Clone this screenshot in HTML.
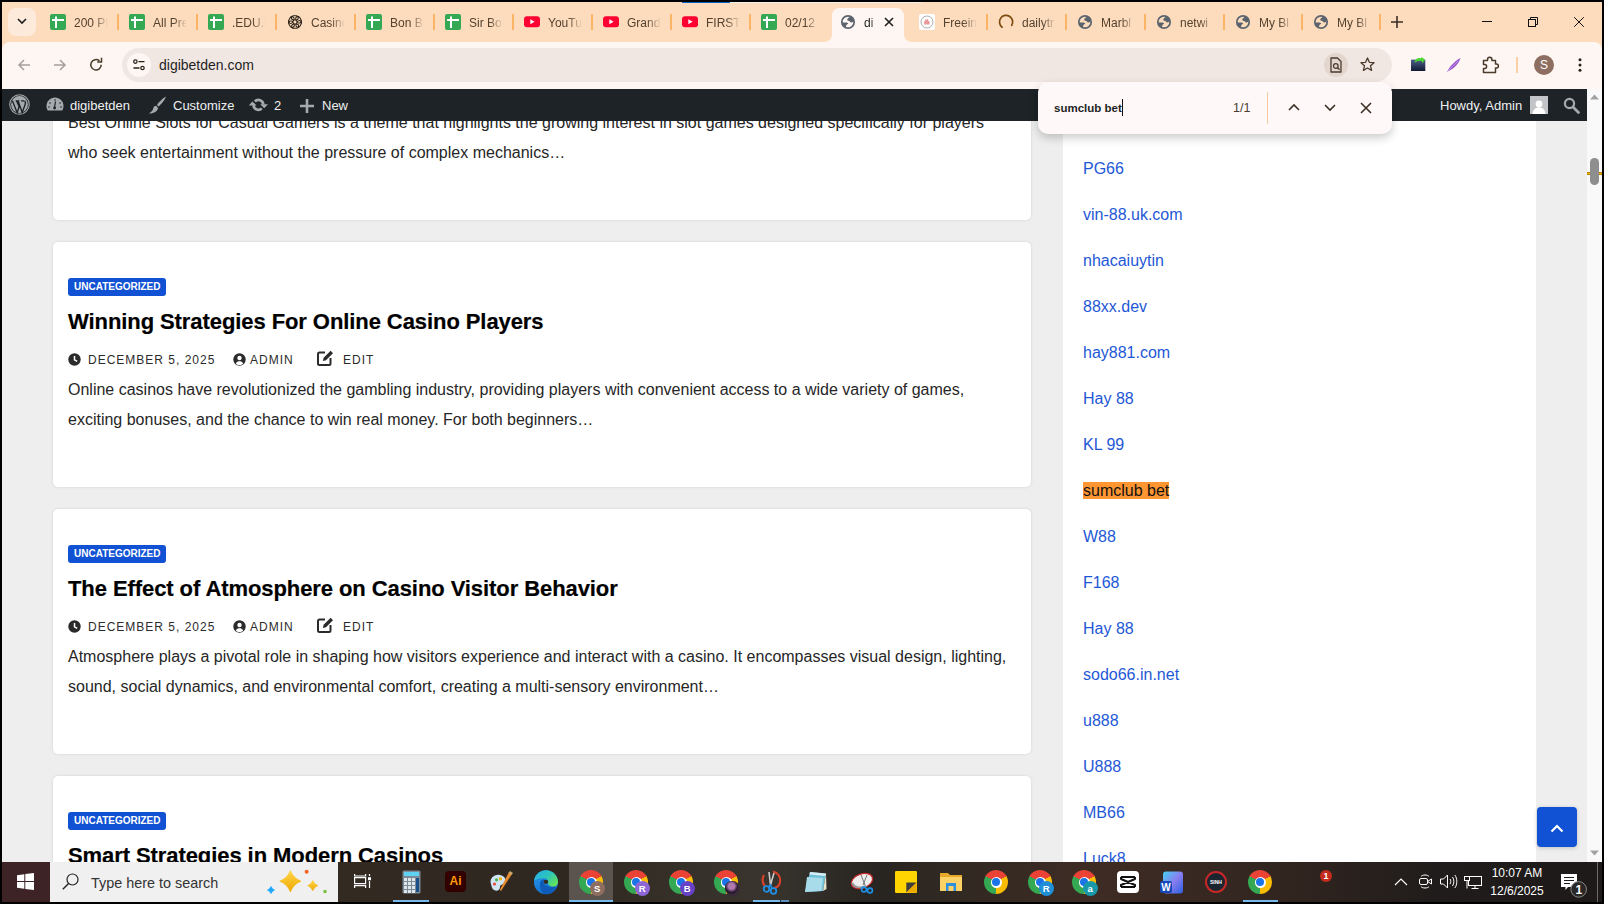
<!DOCTYPE html>
<html><head><meta charset="utf-8">
<style>
*{margin:0;padding:0;box-sizing:border-box}
html,body{width:1604px;height:904px;overflow:hidden;background:#000;font-family:"Liberation Sans",sans-serif;position:relative}
.a{position:absolute}
svg{display:block;overflow:visible}
#tabstrip{left:2px;top:2px;width:1600px;height:60px;background:#fddcbe}
#toolbar{left:2px;top:42px;width:1600px;height:47px;background:#fef6f2;border-radius:8px 8px 0 0}
#omni{left:122px;top:48px;width:1270px;height:34px;background:#f1e7e2;border-radius:17px}
#adminbar{left:2px;top:89px;width:1585px;height:32px;background:#1d2327;color:#f0f0f1;font-size:13px}
#content{left:2px;top:121px;width:1585px;height:741px;background:#eeeeee;overflow:hidden}
#scroll{left:1587px;top:89px;width:15px;height:773px;background:#f9f9f9}
#taskbar{left:2px;top:862px;width:1600px;height:40px;background:linear-gradient(90deg,#332a22 21%,#2f2820 34.9%,#39352e 47.4%,#272421 54.9%,#2f2822 58%,#3e2c24 68.6%,#30241f 81.1%,#1f1c1b 89.9%,#1d1a19 100%)}
.card{position:absolute;left:51px;width:978px;background:#fff;border-radius:5px;box-shadow:0 0 3px rgba(0,0,0,.12)}
.badge{position:absolute;left:15px;height:18px;padding:0 6px;background:#1151d3;color:#fff;font-size:10px;font-weight:700;line-height:18px;border-radius:3px}
.h{position:absolute;left:15px;font-size:22px;font-weight:700;color:#000;letter-spacing:-0.08px;white-space:nowrap;-webkit-text-stroke:0.2px #000}
.meta{position:absolute;font-size:12px;letter-spacing:1px;color:#2b2b2b;white-space:nowrap}
.ex{position:absolute;left:15px;font-size:16px;color:#262626;line-height:30px;white-space:nowrap}
#sidebar{left:1061px;top:0;width:473px;height:741px;background:#fff}
.lk{position:absolute;left:20px;font-size:16px;color:#1e58d6;white-space:nowrap;line-height:18px}
.sep{position:absolute;top:14px;width:2px;height:16px;background:#fbb466}
.tt{position:absolute;top:15px;font-size:12px;line-height:16px;color:#54422f;white-space:nowrap;width:34px;overflow:hidden;-webkit-mask-image:linear-gradient(90deg,#000 60%,transparent 100%)}
.ab{position:absolute;top:1px;line-height:32px;white-space:nowrap;color:#f0f0f1}
</style></head><body>

<div id="tabstrip" class="a"></div>
<div class="a" style="left:682px;top:2px;width:48px;height:1px;background:#0b62c4"></div><div class="a" style="left:730px;top:2px;width:192px;height:1px;background:#f2efec"></div>
<!-- tab dropdown -->
<div class="a" style="left:8px;top:8px;width:28px;height:28px;background:#feeadb;border-radius:8px"></div>
<svg class="a" style="left:16px;top:17px" width="12" height="8" viewBox="0 0 12 8"><path d="M2 2 L6 6 L10 2" fill="none" stroke="#1f1f1f" stroke-width="1.6"/></svg>
<svg class="a" style="left:50px;top:14px" width="16" height="16" viewBox="0 0 16 16"><rect width="16" height="16" rx="2" fill="#34a853"/><rect x="2" y="5" width="12" height="2" fill="#fff"/><rect x="5" y="2.5" width="2" height="11.5" fill="#fff"/></svg>
<div class="tt" style="left:74px">200 PI</div>
<svg class="a" style="left:129px;top:14px" width="16" height="16" viewBox="0 0 16 16"><rect width="16" height="16" rx="2" fill="#34a853"/><rect x="2" y="5" width="12" height="2" fill="#fff"/><rect x="5" y="2.5" width="2" height="11.5" fill="#fff"/></svg>
<div class="tt" style="left:153px">All Pre</div>
<svg class="a" style="left:208px;top:14px" width="16" height="16" viewBox="0 0 16 16"><rect width="16" height="16" rx="2" fill="#34a853"/><rect x="2" y="5" width="12" height="2" fill="#fff"/><rect x="5" y="2.5" width="2" height="11.5" fill="#fff"/></svg>
<div class="tt" style="left:232px">.EDU.F</div>
<svg class="a" style="left:287px;top:14px" width="16" height="16" viewBox="0 0 16 16"><g fill="none" stroke="#2a2118" stroke-width="1.05"><rect x="4.3" y="1.7" width="7" height="4.3" rx="2.15" transform="rotate(0 8 8)"/><rect x="4.3" y="1.7" width="7" height="4.3" rx="2.15" transform="rotate(60 8 8)"/><rect x="4.3" y="1.7" width="7" height="4.3" rx="2.15" transform="rotate(120 8 8)"/><rect x="4.3" y="1.7" width="7" height="4.3" rx="2.15" transform="rotate(180 8 8)"/><rect x="4.3" y="1.7" width="7" height="4.3" rx="2.15" transform="rotate(240 8 8)"/><rect x="4.3" y="1.7" width="7" height="4.3" rx="2.15" transform="rotate(300 8 8)"/></g></svg>
<div class="tt" style="left:311px">Casino</div>
<svg class="a" style="left:366px;top:14px" width="16" height="16" viewBox="0 0 16 16"><rect width="16" height="16" rx="2" fill="#34a853"/><rect x="2" y="5" width="12" height="2" fill="#fff"/><rect x="5" y="2.5" width="2" height="11.5" fill="#fff"/></svg>
<div class="tt" style="left:390px">Bon B</div>
<svg class="a" style="left:445px;top:14px" width="16" height="16" viewBox="0 0 16 16"><rect width="16" height="16" rx="2" fill="#34a853"/><rect x="2" y="5" width="12" height="2" fill="#fff"/><rect x="5" y="2.5" width="2" height="11.5" fill="#fff"/></svg>
<div class="tt" style="left:469px">Sir Bo</div>
<svg class="a" style="left:524px;top:16px" width="16" height="12" viewBox="0 0 16 12"><rect y="0.3" width="16" height="11" rx="3" fill="#ff0033"/><path d="M6.3 3.3 L10.6 5.8 L6.3 8.3Z" fill="#fff"/></svg>
<div class="tt" style="left:548px">YouTu</div>
<svg class="a" style="left:603px;top:16px" width="16" height="12" viewBox="0 0 16 12"><rect y="0.3" width="16" height="11" rx="3" fill="#ff0033"/><path d="M6.3 3.3 L10.6 5.8 L6.3 8.3Z" fill="#fff"/></svg>
<div class="tt" style="left:627px">Grand</div>
<svg class="a" style="left:682px;top:16px" width="16" height="12" viewBox="0 0 16 12"><rect y="0.3" width="16" height="11" rx="3" fill="#ff0033"/><path d="M6.3 3.3 L10.6 5.8 L6.3 8.3Z" fill="#fff"/></svg>
<div class="tt" style="left:706px">FIRST</div>
<svg class="a" style="left:761px;top:14px" width="16" height="16" viewBox="0 0 16 16"><rect width="16" height="16" rx="2" fill="#34a853"/><rect x="2" y="5" width="12" height="2" fill="#fff"/><rect x="5" y="2.5" width="2" height="11.5" fill="#fff"/></svg>
<div class="tt" style="left:785px">02/12</div>
<svg class="a" style="left:919px;top:14px" width="16" height="16" viewBox="0 0 16 16"><rect width="16" height="16" rx="2" fill="#fff"/><circle cx="8" cy="8" r="6" fill="none" stroke="#888" stroke-width="0.7"/><path d="M5.2 10.6 L5.2 7 L6.6 6.2 L6.6 5 L8 5.8 L8.6 4.6 L9.2 6.6 L10.6 7.4 L10.6 10.6Z" fill="#e89a9a"/></svg>
<div class="tt" style="left:943px">Freein</div>
<svg class="a" style="left:998px;top:14px" width="16" height="16" viewBox="0 0 16 16"><path d="M4.1 13.2 A6.6 6.6 0 1 1 13.7 11.4" fill="none" stroke="#7b4a0c" stroke-width="1.7" stroke-linecap="round"/></svg>
<div class="tt" style="left:1022px">dailytr</div>
<svg class="a" style="left:1077px;top:14px" width="16" height="16" viewBox="0 0 16 16"><circle cx="8" cy="8" r="6.2" fill="none" stroke="#5b636d" stroke-width="1.7"/><path d="M7.2 5.5 C7.8 4 9 3 11 2.4 L14 5 L13.8 7.4 C12.5 8.2 11.5 8.6 10.8 8.4 C10.2 7.8 9.8 7.2 9 7 C8 6.8 7.3 6.5 7.2 5.5Z" fill="#5b636d"/><path d="M2 8.4 L6.6 8.4 C7.5 8.5 8.3 9.2 8.2 9.8 C7.5 10.3 6.6 10.6 6.3 11.4 C6 12.2 6 12.8 5.8 13.8 L2.5 11Z" fill="#5b636d"/></svg>
<div class="tt" style="left:1101px">Marbl</div>
<svg class="a" style="left:1156px;top:14px" width="16" height="16" viewBox="0 0 16 16"><circle cx="8" cy="8" r="6.2" fill="none" stroke="#5b636d" stroke-width="1.7"/><path d="M7.2 5.5 C7.8 4 9 3 11 2.4 L14 5 L13.8 7.4 C12.5 8.2 11.5 8.6 10.8 8.4 C10.2 7.8 9.8 7.2 9 7 C8 6.8 7.3 6.5 7.2 5.5Z" fill="#5b636d"/><path d="M2 8.4 L6.6 8.4 C7.5 8.5 8.3 9.2 8.2 9.8 C7.5 10.3 6.6 10.6 6.3 11.4 C6 12.2 6 12.8 5.8 13.8 L2.5 11Z" fill="#5b636d"/></svg>
<div class="tt" style="left:1180px">netwi</div>
<svg class="a" style="left:1235px;top:14px" width="16" height="16" viewBox="0 0 16 16"><circle cx="8" cy="8" r="6.2" fill="none" stroke="#5b636d" stroke-width="1.7"/><path d="M7.2 5.5 C7.8 4 9 3 11 2.4 L14 5 L13.8 7.4 C12.5 8.2 11.5 8.6 10.8 8.4 C10.2 7.8 9.8 7.2 9 7 C8 6.8 7.3 6.5 7.2 5.5Z" fill="#5b636d"/><path d="M2 8.4 L6.6 8.4 C7.5 8.5 8.3 9.2 8.2 9.8 C7.5 10.3 6.6 10.6 6.3 11.4 C6 12.2 6 12.8 5.8 13.8 L2.5 11Z" fill="#5b636d"/></svg>
<div class="tt" style="left:1259px">My Bl</div>
<svg class="a" style="left:1313px;top:14px" width="16" height="16" viewBox="0 0 16 16"><circle cx="8" cy="8" r="6.2" fill="none" stroke="#5b636d" stroke-width="1.7"/><path d="M7.2 5.5 C7.8 4 9 3 11 2.4 L14 5 L13.8 7.4 C12.5 8.2 11.5 8.6 10.8 8.4 C10.2 7.8 9.8 7.2 9 7 C8 6.8 7.3 6.5 7.2 5.5Z" fill="#5b636d"/><path d="M2 8.4 L6.6 8.4 C7.5 8.5 8.3 9.2 8.2 9.8 C7.5 10.3 6.6 10.6 6.3 11.4 C6 12.2 6 12.8 5.8 13.8 L2.5 11Z" fill="#5b636d"/></svg>
<div class="tt" style="left:1337px">My Bl</div>
<div class="sep" style="left:117px"></div>
<div class="sep" style="left:196px"></div>
<div class="sep" style="left:275px"></div>
<div class="sep" style="left:354px"></div>
<div class="sep" style="left:433px"></div>
<div class="sep" style="left:512px"></div>
<div class="sep" style="left:591px"></div>
<div class="sep" style="left:670px"></div>
<div class="sep" style="left:749px"></div>
<div class="sep" style="left:986px"></div>
<div class="sep" style="left:1065px"></div>
<div class="sep" style="left:1144px"></div>
<div class="sep" style="left:1223px"></div>
<div class="sep" style="left:1301px"></div>
<div class="sep" style="left:1379px"></div>
<!-- active tab -->
<svg class="a" style="left:823px;top:8px" width="90" height="34" viewBox="0 0 90 34"><path d="M0 34 C6 34 9 31 9 26 L9 8 C9 3 12 0 17 0 L73 0 C78 0 81 3 81 8 L81 26 C81 31 84 34 90 34Z" fill="#fef6f2"/></svg>
<svg class="a" style="left:840px;top:14px" width="16" height="16" viewBox="0 0 16 16"><circle cx="8" cy="8" r="6.2" fill="none" stroke="#5b636d" stroke-width="1.7"/><path d="M7.2 5.5 C7.8 4 9 3 11 2.4 L14 5 L13.8 7.4 C12.5 8.2 11.5 8.6 10.8 8.4 C10.2 7.8 9.8 7.2 9 7 C8 6.8 7.3 6.5 7.2 5.5Z" fill="#5b636d"/><path d="M2 8.4 L6.6 8.4 C7.5 8.5 8.3 9.2 8.2 9.8 C7.5 10.3 6.6 10.6 6.3 11.4 C6 12.2 6 12.8 5.8 13.8 L2.5 11Z" fill="#5b636d"/></svg>
<div class="tt" style="left:864px;width:12px;color:#1f1f1f">di</div>
<svg class="a" style="left:884px;top:17px" width="10" height="10" viewBox="0 0 10 10"><path d="M1 1 L9 9 M9 1 L1 9" stroke="#1f1f1f" stroke-width="1.6"/></svg>
<!-- new tab + -->
<svg class="a" style="left:1390px;top:15px" width="14" height="14" viewBox="0 0 14 14"><path d="M7 1 V13 M1 7 H13" stroke="#3b2f26" stroke-width="1.6"/></svg>
<!-- window controls -->
<svg class="a" style="left:1482px;top:21px" width="10" height="2" viewBox="0 0 10 2"><rect width="10" height="1" fill="#111"/></svg>
<svg class="a" style="left:1528px;top:17px" width="10" height="10" viewBox="0 0 10 10"><rect x="0.5" y="2.5" width="7" height="7" fill="none" stroke="#111" stroke-width="1"/><path d="M2.5 2.5 V0.5 H9.5 V7.5 H7.5" fill="none" stroke="#111" stroke-width="1"/></svg>
<svg class="a" style="left:1574px;top:17px" width="10" height="10" viewBox="0 0 10 10"><path d="M0.2 0.2 L9.8 9.8 M9.8 0.2 L0.2 9.8" stroke="#111" stroke-width="1"/></svg>

<div id="toolbar" class="a"></div>
<!-- nav -->
<svg class="a" style="left:18px;top:59px" width="12" height="12" viewBox="0 0 12 12"><path d="M12 6 H1.2 M6 1 L1 6 L6 11" fill="none" stroke="#a99f99" stroke-width="1.5"/></svg>
<svg class="a" style="left:54px;top:59px" width="12" height="12" viewBox="0 0 12 12"><path d="M0 6 H10.8 M6 1 L11 6 L6 11" fill="none" stroke="#a99f99" stroke-width="1.5"/></svg>
<svg class="a" style="left:89px;top:58px" width="14" height="14" viewBox="0 0 14 14"><path d="M12.2 6.8 A5.2 5.2 0 1 1 10.4 2.9" fill="none" stroke="#4a3b2c" stroke-width="1.5"/><path d="M8.2 4 H12.5 V-0.3" fill="none" stroke="#4a3b2c" stroke-width="1.5"/></svg>
<div id="omni" class="a"></div>
<div class="a" style="left:127px;top:53px;width:24px;height:24px;border-radius:12px;background:#fef6f2"></div>
<svg class="a" style="left:133px;top:59px" width="12" height="12" viewBox="0 0 12 12"><circle cx="2.4" cy="2.6" r="1.7" fill="none" stroke="#2a2118" stroke-width="1.2"/><path d="M5.5 2.6 H11.5 M0.5 9 H6.5" stroke="#2a2118" stroke-width="1.3"/><circle cx="9.5" cy="9" r="1.7" fill="none" stroke="#2a2118" stroke-width="1.2"/></svg>
<div class="a" style="left:159px;top:56px;font-size:14px;line-height:18px;color:#1f1f1f">digibetden.com</div>
<div class="a" style="left:1324px;top:53px;width:24px;height:24px;border-radius:12px;background:#e2d6cf"></div>
<svg class="a" style="left:1330px;top:57px" width="12" height="16" viewBox="0 0 12 16"><path d="M1 1 H7.5 L11 4.5 V15 H1Z" fill="none" stroke="#4a3b2c" stroke-width="1.3" stroke-linejoin="round"/><circle cx="5.8" cy="9" r="2.3" fill="none" stroke="#4a3b2c" stroke-width="1.3"/><path d="M7.4 10.6 L9.6 12.8" stroke="#4a3b2c" stroke-width="1.4"/></svg>
<svg class="a" style="left:1360px;top:57px" width="15" height="15" viewBox="0 0 15 15"><path d="M7.5 1 L9.4 5.3 L14 5.7 L10.5 8.8 L11.6 13.4 L7.5 11 L3.4 13.4 L4.5 8.8 L1 5.7 L5.6 5.3Z" fill="none" stroke="#4a3b2c" stroke-width="1.3" stroke-linejoin="round"/></svg>
<!-- extensions -->
<svg class="a" style="left:1410px;top:56px" width="16" height="16" viewBox="0 0 16 16"><defs><linearGradient id="fg" x1="0" y1="0" x2="0" y2="1"><stop offset="0" stop-color="#4f5f88"/><stop offset="1" stop-color="#0f1a35"/></linearGradient></defs><path d="M1 3.6 H15.3 V15 H1Z" fill="url(#fg)"/><path d="M4.3 7 C5.3 3.2 8 1.2 10.6 2.4 L11.6 1.2 L15 3.6 L12.6 7.3 L11.8 5.3 C10 4.2 7 4.8 4.3 7Z" fill="#4ad630"/></svg>
<svg class="a" style="left:1446px;top:57px" width="16" height="16" viewBox="0 0 16 16"><path d="M1 15 C3 11 7 5 14.5 1 C13 6 9 11 3.5 13.5 Z" fill="#9b59d0"/><path d="M1 15 L12 4" stroke="#c9a0ee" stroke-width="0.7"/></svg>
<svg class="a" style="left:1482px;top:56px" width="18" height="18" viewBox="0 0 18 18"><path d="M1.5 4.5 H5.5 V3.5 C5.5 2.2 6.4 1.2 7.7 1.2 C9 1.2 9.9 2.2 9.9 3.5 V4.5 H13.5 V8 H14.3 C15.5 8 16.4 8.9 16.4 10 C16.4 11.1 15.5 12 14.3 12 H13.5 V16.5 H1.5 V12.5 H2.8 C3.9 12.5 4.6 11.6 4.6 10.5 C4.6 9.4 3.9 8.5 2.8 8.5 H1.5Z" fill="none" stroke="#4a3b2c" stroke-width="1.5" stroke-linejoin="round"/></svg>
<div class="a" style="left:1516px;top:57px;width:2px;height:16px;background:#fad0a6"></div>
<div class="a" style="left:1534px;top:55px;width:20px;height:20px;border-radius:10px;background:#8d6e60;color:#fff;font-size:12px;line-height:20px;text-align:center">S</div>
<svg class="a" style="left:1578px;top:58px" width="4" height="14" viewBox="0 0 4 14"><circle cx="2" cy="1.8" r="1.5" fill="#2a2118"/><circle cx="2" cy="7" r="1.5" fill="#2a2118"/><circle cx="2" cy="12.2" r="1.5" fill="#2a2118"/></svg>

<div id="adminbar" class="a">
  <svg class="a" style="left:7px;top:5px" width="21" height="21" viewBox="0 0 20 20"><circle cx="10" cy="10" r="9.3" fill="none" stroke="#a7aaad" stroke-width="1"/><circle cx="10" cy="10" r="8" fill="#a7aaad"/><path d="M3.2 6.5 L7.8 17.8 L9.6 12.2 L7.2 6.5 M6.3 6.5 H9.8 M8.6 6.5 L12.6 17.6 L15.3 10.2 C15.9 8.6 15.6 7.4 15.2 6.5 M11.5 6.5 H14.5" fill="none" stroke="#1d2327" stroke-width="1.3"/></svg>
  <svg class="a" style="left:44px;top:8px" width="18" height="14" viewBox="0 0 18 14"><path d="M9 0.5 C4.3 0.5 0.5 4.3 0.5 9 C0.5 10.8 1 12.3 1.8 13.5 H16.2 C17 12.3 17.5 10.8 17.5 9 C17.5 4.3 13.7 0.5 9 0.5Z" fill="#a7aaad"/><path d="M9.5 4.5 L8.5 10.5" stroke="#1d2327" stroke-width="1.2"/><circle cx="8.6" cy="11" r="1.4" fill="#1d2327"/><circle cx="4" cy="6" r="0.8" fill="#1d2327"/><circle cx="14" cy="6" r="0.8" fill="#1d2327"/><circle cx="9" cy="3" r="0.8" fill="#1d2327"/><circle cx="3" cy="10" r="0.8" fill="#1d2327"/><circle cx="15" cy="10" r="0.8" fill="#1d2327"/></svg>
  <div class="ab" style="left:68px">digibetden</div>
  <svg class="a" style="left:146px;top:7px" width="19" height="18" viewBox="0 0 19 18"><path d="M18 0.5 C15 2 11 6 9 9 L10.5 10.5 C13 8.5 17 4 18 0.5Z M8.2 9.8 C6.5 9.8 5.5 11 5.2 12.5 C5 14 4 15.5 1 17.5 C5 17.5 9.5 16 10 12 Z" fill="#a7aaad"/></svg>
  <div class="ab" style="left:171px">Customize</div>
  <svg class="a" style="left:246px;top:7px" width="21" height="18" viewBox="0 0 21 18"><path d="M6.94 5.44 A4.9 4.9 0 0 1 15.3 8.6" fill="none" stroke="#a7aaad" stroke-width="2.7"/><path d="M12.2 8.2 L20 8.2 L16.2 12.3Z" fill="#a7aaad"/><path d="M13.86 12.36 A4.9 4.9 0 0 1 5.5 9.2" fill="none" stroke="#a7aaad" stroke-width="2.7"/><path d="M0.8 9.4 L8.6 9.4 L4.3 5.6Z" fill="#a7aaad"/></svg>
  <div class="ab" style="left:272px">2</div>
  <svg class="a" style="left:298px;top:10px" width="14" height="14" viewBox="0 0 14 14"><path d="M5.7 0 H8.3 V5.7 H14 V8.3 H8.3 V14 H5.7 V8.3 H0 V5.7 H5.7Z" fill="#a7aaad"/></svg>
  <div class="ab" style="left:320px">New</div>
  <div class="ab" style="left:1438px">Howdy, Admin</div>
  <svg class="a" style="left:1528px;top:7px" width="18" height="18" viewBox="0 0 18 18"><rect width="18" height="18" fill="#c3c4c7"/><circle cx="9" cy="8" r="3.4" fill="#fff"/><path d="M2.5 18 C3 13.5 5.5 11.5 9 11.5 C12.5 11.5 15 13.5 15.5 18Z" fill="#fff"/></svg>
  <svg class="a" style="left:1561px;top:8px" width="17" height="17" viewBox="0 0 17 17"><circle cx="6.5" cy="6.5" r="4.6" fill="none" stroke="#a7aaad" stroke-width="2.2"/><path d="M10 10 L15.5 15.5" stroke="#a7aaad" stroke-width="2.8" stroke-linecap="round"/></svg>
</div>

<div id="content" class="a">
  <div class="card" style="top:-60px;height:159px">
    <div class="ex" style="top:47px">Best Online Slots for Casual Gamers is a theme that highlights the growing interest in slot games designed specifically for players<br>who seek entertainment without the pressure of complex mechanics…</div>
  </div>
  <div class="card" style="top:121px;height:245px">
    <div class="badge" style="top:36px">UNCATEGORIZED</div>
    <div class="h" style="top:67px">Winning Strategies For Online Casino Players</div>
    <svg class="a" style="left:15px;top:111px" width="13" height="13" viewBox="0 0 13 13"><circle cx="6.5" cy="6.5" r="6.2" fill="#2b2b2b"/><path d="M6.5 3 V6.8 L9.2 8.4" fill="none" stroke="#fff" stroke-width="1.5"/></svg>
    <div class="meta" style="left:35px;top:111px">DECEMBER 5, 2025</div>
    <svg class="a" style="left:180px;top:111px" width="13" height="13" viewBox="0 0 13 13"><circle cx="6.5" cy="6.5" r="6.2" fill="#2b2b2b"/><circle cx="6.5" cy="5" r="2.2" fill="#fff"/><path d="M2.8 10.6 C3.6 8.8 5 8.2 6.5 8.2 C8 8.2 9.4 8.8 10.2 10.6 C9.2 11.6 7.9 12.1 6.5 12.1 C5.1 12.1 3.8 11.6 2.8 10.6Z" fill="#fff"/></svg>
    <div class="meta" style="left:197px;top:111px">ADMIN</div>
    <svg class="a" style="left:264px;top:108px" width="17" height="16" viewBox="0 0 17 16"><path d="M8 2.5 H2.5 C1.7 2.5 1 3.2 1 4 V13.5 C1 14.3 1.7 15 2.5 15 H12 C12.8 15 13.5 14.3 13.5 13.5 V8" fill="none" stroke="#2b2b2b" stroke-width="2"/><path d="M13.6 0.8 L16 3.2 L9 10.2 L5.8 11 L6.6 7.8Z" fill="#2b2b2b"/></svg>
    <div class="meta" style="left:290px;top:111px">EDIT</div>
    <div class="ex" style="top:133px">Online casinos have revolutionized the gambling industry, providing players with convenient access to a wide variety of games,<br>exciting bonuses, and the chance to win real money. For both beginners…</div>
  </div>
  <div class="card" style="top:388px;height:245px">
    <div class="badge" style="top:36px">UNCATEGORIZED</div>
    <div class="h" style="top:67px">The Effect of Atmosphere on Casino Visitor Behavior</div>
    <svg class="a" style="left:15px;top:111px" width="13" height="13" viewBox="0 0 13 13"><circle cx="6.5" cy="6.5" r="6.2" fill="#2b2b2b"/><path d="M6.5 3 V6.8 L9.2 8.4" fill="none" stroke="#fff" stroke-width="1.5"/></svg>
    <div class="meta" style="left:35px;top:111px">DECEMBER 5, 2025</div>
    <svg class="a" style="left:180px;top:111px" width="13" height="13" viewBox="0 0 13 13"><circle cx="6.5" cy="6.5" r="6.2" fill="#2b2b2b"/><circle cx="6.5" cy="5" r="2.2" fill="#fff"/><path d="M2.8 10.6 C3.6 8.8 5 8.2 6.5 8.2 C8 8.2 9.4 8.8 10.2 10.6 C9.2 11.6 7.9 12.1 6.5 12.1 C5.1 12.1 3.8 11.6 2.8 10.6Z" fill="#fff"/></svg>
    <div class="meta" style="left:197px;top:111px">ADMIN</div>
    <svg class="a" style="left:264px;top:108px" width="17" height="16" viewBox="0 0 17 16"><path d="M8 2.5 H2.5 C1.7 2.5 1 3.2 1 4 V13.5 C1 14.3 1.7 15 2.5 15 H12 C12.8 15 13.5 14.3 13.5 13.5 V8" fill="none" stroke="#2b2b2b" stroke-width="2"/><path d="M13.6 0.8 L16 3.2 L9 10.2 L5.8 11 L6.6 7.8Z" fill="#2b2b2b"/></svg>
    <div class="meta" style="left:290px;top:111px">EDIT</div>
    <div class="ex" style="top:133px">Atmosphere plays a pivotal role in shaping how visitors experience and interact with a casino. It encompasses visual design, lighting,<br>sound, social dynamics, and environmental comfort, creating a multi-sensory environment…</div>
  </div>
  <div class="card" style="top:655px;height:245px">
    <div class="badge" style="top:36px">UNCATEGORIZED</div>
    <div class="h" style="top:67px">Smart Strategies in Modern Casinos</div>
  </div>
  <div id="sidebar" class="a">
<div class="lk" style="top:39px">PG66</div>
<div class="lk" style="top:85px">vin-88.uk.com</div>
<div class="lk" style="top:131px">nhacaiuytin</div>
<div class="lk" style="top:177px">88xx.dev</div>
<div class="lk" style="top:223px">hay881.com</div>
<div class="lk" style="top:269px">Hay 88</div>
<div class="lk" style="top:315px">KL 99</div>
<div class="lk" style="top:361px"><span style="background:#ff9632;color:#111">sumclub bet</span></div>
<div class="lk" style="top:407px">W88</div>
<div class="lk" style="top:453px">F168</div>
<div class="lk" style="top:499px">Hay 88</div>
<div class="lk" style="top:545px">sodo66.in.net</div>
<div class="lk" style="top:591px">u888</div>
<div class="lk" style="top:637px">U888</div>
<div class="lk" style="top:683px">MB66</div>
<div class="lk" style="top:729px">Luck8</div>
  </div>
  <div class="a" style="left:1535px;top:686px;width:40px;height:40px;border-radius:4px;background:#1151d3;box-shadow:0 1px 4px rgba(0,0,0,.2)"></div>
  <svg class="a" style="left:1548px;top:703px" width="14" height="9" viewBox="0 0 14 9"><path d="M1.5 7.5 L7 2 L12.5 7.5" fill="none" stroke="#fff" stroke-width="2.2"/></svg>
</div>

<!-- find bar -->
<div class="a" style="left:1038px;top:82px;width:354px;height:52px;background:#fef8f9;border-radius:10px;box-shadow:0 4px 10px rgba(0,0,0,.2)"></div>
<div class="a" style="left:1054px;top:100px;font-size:11.5px;font-weight:700;line-height:16px;color:#1f1f1f">sumclub bet</div>
<div class="a" style="left:1122px;top:99px;width:1px;height:17px;background:#111"></div>
<div class="a" style="left:1233px;top:100px;font-size:12.5px;line-height:16px;color:#4a3b2e">1/1</div>
<div class="a" style="left:1267px;top:92px;width:1px;height:32px;background:#f6c9a0"></div>
<svg class="a" style="left:1288px;top:103px" width="12" height="8" viewBox="0 0 12 8"><path d="M1 7 L6 2 L11 7" fill="none" stroke="#3b2f26" stroke-width="1.6"/></svg>
<svg class="a" style="left:1324px;top:104px" width="12" height="8" viewBox="0 0 12 8"><path d="M1 1 L6 6 L11 1" fill="none" stroke="#3b2f26" stroke-width="1.6"/></svg>
<svg class="a" style="left:1360px;top:102px" width="12" height="12" viewBox="0 0 12 12"><path d="M1 1 L11 11 M11 1 L1 11" stroke="#3b2f26" stroke-width="1.6"/></svg>

<div id="scroll" class="a"></div>
<svg class="a" style="left:1590px;top:94px" width="9" height="6" viewBox="0 0 9 6"><path d="M0 5.5 L4.5 0.5 L9 5.5Z" fill="#a3a3a3"/></svg>
<svg class="a" style="left:1590px;top:850px" width="9" height="6" viewBox="0 0 9 6"><path d="M0 0.5 L4.5 5.5 L9 0.5Z" fill="#a3a3a3"/></svg>
<div class="a" style="left:1587px;top:172px;width:15px;height:3px;background:linear-gradient(#7a5000,#f2b400 35%,#f2b400 65%,#7a5000)"></div>
<div class="a" style="left:1590px;top:158px;width:9px;height:27px;border-radius:5px;background:#8e8e8e"></div>

<div id="taskbar" class="a">
<div class="a" style="left:0;top:0;width:48px;height:40px;background:#3d2325"></div>
<svg class="a" style="left:15px;top:11px" width="18" height="17" viewBox="0 0 18 17"><path d="M0 2.3 L7.3 1.3 V8 H0Z M8.3 1.1 L17 0 V8 H8.3Z M0 9 H7.3 V15.7 L0 14.7Z M8.3 9 H17 V17 L8.3 15.9Z" fill="#fff"/></svg>
<div class="a" style="left:48px;top:0;width:288px;height:40px;background:#f0f0f0"></div>
<svg class="a" style="left:60px;top:11px" width="17" height="17" viewBox="0 0 17 17"><circle cx="10.5" cy="6.5" r="5.5" fill="none" stroke="#222" stroke-width="1.2"/><path d="M6.6 10.4 L0.8 16.2" stroke="#222" stroke-width="1.4"/></svg>
<div class="a" style="left:89px;top:13px;font-size:14.4px;line-height:17px;color:#333;white-space:nowrap">Type here to search</div>
<svg class="a" style="left:262px;top:5px" width="70" height="32" viewBox="0 0 70 32"><defs><linearGradient id="sg" x1="0" y1="0" x2="0" y2="1"><stop offset="0" stop-color="#ffd54a"/><stop offset="1" stop-color="#f0a800"/></linearGradient></defs><path d="M26.4 3.5999999999999996 Q29.368 11.232 37.0 14.2 Q29.368 17.168 26.4 24.799999999999997 Q23.432 17.168 15.799999999999999 14.2 Q23.432 11.232 26.4 3.5999999999999996Z" fill="url(#sg)" stroke="url(#sg)" stroke-width="0.8" stroke-linejoin="round"/><path d="M48.8 13.600000000000001 Q50.199999999999996 17.200000000000003 53.8 18.6 Q50.199999999999996 20.0 48.8 23.6 Q47.4 20.0 43.8 18.6 Q47.4 17.200000000000003 48.8 13.600000000000001Z" fill="url(#sg)" stroke="url(#sg)" stroke-width="0.8" stroke-linejoin="round"/><path d="M7 19.5 Q8.05 21.95 10.5 23 Q8.05 24.05 7 26.5 Q5.95 24.05 3.5 23 Q5.95 21.95 7 19.5Z" fill="#1ea7fd" stroke="#1ea7fd" stroke-width="0.8" stroke-linejoin="round"/><circle cx="42.6" cy="4.8" r="2" fill="#f26522"/><circle cx="61" cy="24.5" r="1.8" fill="#7ac143"/></svg>
<svg class="a" style="left:351px;top:11px" width="18" height="16" viewBox="0 0 18 16"><path d="M1.6 1 V3 H12.6 V1 M1.6 4.6 H12.6 V10.6 H1.6Z M1.6 15 V12.6 H12.6 V15 M16.5 1 V3 M16.5 8 V15" fill="none" stroke="#fff" stroke-width="1.2"/><rect x="15" y="4.2" width="3" height="3" fill="#fff"/></svg>
<svg class="a" style="left:400px;top:8px" width="19" height="24" viewBox="0 0 19 24"><rect x="0.5" y="0.5" width="18" height="23" rx="1.5" fill="#7b8a96"/><rect x="2" y="2" width="15" height="4" fill="#5fd2f3"/><rect x="2" y="8" width="3" height="3" fill="#dfe6ea"/><rect x="6" y="8" width="3" height="3" fill="#dfe6ea"/><rect x="10" y="8" width="3" height="3" fill="#dfe6ea"/><rect x="2" y="12" width="3" height="3" fill="#dfe6ea"/><rect x="6" y="12" width="3" height="3" fill="#dfe6ea"/><rect x="10" y="12" width="3" height="3" fill="#dfe6ea"/><rect x="2" y="16" width="3" height="3" fill="#dfe6ea"/><rect x="6" y="16" width="3" height="3" fill="#dfe6ea"/><rect x="10" y="16" width="3" height="3" fill="#dfe6ea"/><rect x="2" y="20" width="3" height="3" fill="#dfe6ea"/><rect x="6" y="20" width="3" height="3" fill="#dfe6ea"/><rect x="10" y="20" width="3" height="3" fill="#dfe6ea"/><rect x="14" y="8" width="3" height="14" fill="#1a4f8a"/></svg>
<div class="a" style="left:391px;top:38px;width:36px;height:2px;background:#76b9ed"></div>
<div class="a" style="left:443px;top:9px;width:21px;height:21px;border-radius:4px;background:#330000;color:#ff9a00;font-size:12px;font-weight:700;line-height:21px;text-align:center">Ai</div>
<svg class="a" style="left:486px;top:9px" width="26" height="24" viewBox="0 0 26 24"><path d="M3 13 C1 8 6 3 12 4 C17 5 19 9 17 12 C15 14 12 13 12 16 C12 19 9 21 6 19 C4 18 3.5 15.5 3 13Z" fill="#cfe3f3"/><circle cx="6.5" cy="13" r="1.6" fill="#e84c3d"/><circle cx="8.5" cy="8.8" r="1.6" fill="#4caf50"/><circle cx="12.5" cy="7.8" r="1.6" fill="#f2b600"/><path d="M21 1 L24 3 L13 20 L11.8 19Z" fill="#e88b2e"/><path d="M22 0 L25 2 L23.5 4 L20.5 2Z" fill="#c9a56a"/></svg>
<svg class="a" style="left:531px;top:8px" width="26" height="25" viewBox="0 0 26 25"><defs><linearGradient id="eg1" x1="0" y1="0" x2="1" y2="0.7"><stop offset="0" stop-color="#28b0f0"/><stop offset=".55" stop-color="#2cc4b8"/><stop offset="1" stop-color="#62e35a"/></linearGradient><linearGradient id="eg2" x1="0" y1="0" x2="0.3" y2="1"><stop offset="0" stop-color="#2a9df0"/><stop offset="1" stop-color="#1470d0"/></linearGradient></defs><circle cx="13" cy="12.2" r="12" fill="url(#eg2)"/><path d="M1.1 10.6 C2 4.5 7 0.2 13 0.2 C19.6 0.2 25 5.5 25 12 C25 14.6 23.4 16.6 20.2 16.6 C17.6 16.6 15.6 15.2 14.9 13.4 C15.8 11.6 14.8 8.4 11.8 8.2 C7.8 8 4 8.8 1.1 10.6Z" fill="url(#eg1)"/><path d="M7 14.5 C7 11 9 9.2 11.6 9.6 C10 10.8 10 13 11.6 14.4 C13.8 16.4 18.4 17.6 23.6 16.8 C21.8 21.4 17.4 24.3 12.8 24.3 C9.2 23.6 7 19.5 7 14.5Z" fill="#0e5cb8"/><ellipse cx="12.9" cy="11.8" rx="2.3" ry="2.1" fill="#34291f"/></svg>
<div class="a" style="left:567px;top:0;width:44px;height:40px;background:#5b534d"></div>
<div class="a" style="left:567px;top:38px;width:44px;height:2px;background:#76b9ed"></div>
<div class="a" style="left:577px;top:8px;width:24px;height:24px;border-radius:50%;background:conic-gradient(from -60deg,#ea4335 0 120deg,#fbbc04 120deg 240deg,#34a853 240deg 360deg)"></div><div class="a" style="left:583.5px;top:14.5px;width:11px;height:11px;border-radius:50%;background:#fff"></div><div class="a" style="left:584.6px;top:15.6px;width:8.8px;height:8.8px;border-radius:50%;background:#1a73e8"></div><div class="a" style="left:587.6px;top:18.5px;width:15px;height:15px;border-radius:50%;background:#8d6e60;color:#fff;font-size:9.5px;line-height:15px;text-align:center;font-weight:700">S</div>
<div class="a" style="left:622px;top:8px;width:24px;height:24px;border-radius:50%;background:conic-gradient(from -60deg,#ea4335 0 120deg,#fbbc04 120deg 240deg,#34a853 240deg 360deg)"></div><div class="a" style="left:628.5px;top:14.5px;width:11px;height:11px;border-radius:50%;background:#fff"></div><div class="a" style="left:629.6px;top:15.6px;width:8.8px;height:8.8px;border-radius:50%;background:#1a73e8"></div><div class="a" style="left:632.6px;top:18.5px;width:15px;height:15px;border-radius:50%;background:#8e67d6;color:#fff;font-size:9.5px;line-height:15px;text-align:center;font-weight:700">R</div>
<div class="a" style="left:667px;top:8px;width:24px;height:24px;border-radius:50%;background:conic-gradient(from -60deg,#ea4335 0 120deg,#fbbc04 120deg 240deg,#34a853 240deg 360deg)"></div><div class="a" style="left:673.5px;top:14.5px;width:11px;height:11px;border-radius:50%;background:#fff"></div><div class="a" style="left:674.6px;top:15.6px;width:8.8px;height:8.8px;border-radius:50%;background:#1a73e8"></div><div class="a" style="left:677.6px;top:18.5px;width:15px;height:15px;border-radius:50%;background:#6741c8;color:#fff;font-size:9.5px;line-height:15px;text-align:center;font-weight:700">B</div>
<div class="a" style="left:712px;top:8px;width:24px;height:24px;border-radius:50%;background:conic-gradient(from -60deg,#ea4335 0 120deg,#fbbc04 120deg 240deg,#34a853 240deg 360deg)"></div><div class="a" style="left:718.5px;top:14.5px;width:11px;height:11px;border-radius:50%;background:#fff"></div><div class="a" style="left:719.6px;top:15.6px;width:8.8px;height:8.8px;border-radius:50%;background:#1a73e8"></div><div class="a" style="left:722.6px;top:18.5px;width:15px;height:15px;border-radius:50%;background:#3a2a3a;color:#fff;font-size:9.5px;line-height:15px;text-align:center;font-weight:700"><span style="display:block;width:13px;height:13px;border-radius:50%;background:radial-gradient(circle at 50% 40%,#b07ab0 0 30%,#2a1a30 60%)"></span></div>
<svg class="a" style="left:758px;top:8px" width="22" height="25" viewBox="0 0 22 25"><path d="M4 5 C2 8 2 13 5 16" fill="none" stroke="#d8402b" stroke-width="2.2"/><path d="M13 1.5 C18 2.5 21 7 20 12 C19.5 15 17 17.5 14 18" fill="none" stroke="#d8402b" stroke-width="2.2"/><path d="M9 2 L10.5 15 M14 3 L10.5 15" stroke="#ccc" stroke-width="1.6"/><circle cx="6.5" cy="19" r="2.8" fill="none" stroke="#1e90e8" stroke-width="1.8"/><circle cx="13.5" cy="21" r="2.8" fill="none" stroke="#1e90e8" stroke-width="1.8"/><path d="M8.5 17 L10.5 15 L12 18.5" stroke="#1e90e8" stroke-width="1.6" fill="none"/></svg>
<div class="a" style="left:751px;top:38px;width:27px;height:2px;background:#76b9ed"></div><div class="a" style="left:779px;top:38px;width:8px;height:2px;background:#5a90c0"></div>
<svg class="a" style="left:801px;top:9px" width="24" height="23" viewBox="0 0 24 23"><path d="M7 1 L23 2.5 L20 20 L2 21Z" fill="#6ec0d8"/><path d="M7 1 L23 2.5 L22.5 5 L6.5 3.5Z" fill="#d8eef5"/><path d="M4 6 L20 7 L18.5 20 L2 21Z" fill="#a8dcea"/><path d="M20 20 L23 2.5 L23.5 18Z" fill="#e8e2c8"/></svg>
<svg class="a" style="left:848px;top:9px" width="26" height="24" viewBox="0 0 26 24"><ellipse cx="12" cy="10" rx="11" ry="7" transform="rotate(-20 12 10)" fill="#eee" stroke="#c62828" stroke-width="1.2"/><path d="M2 12 C4 16 10 18 16 15" fill="none" stroke="#999" stroke-width="2"/><path d="M11 4 L15 14 M17 4 L13 14" stroke="#777" stroke-width="1"/><circle cx="14" cy="18.5" r="2.4" fill="none" stroke="#1e90e8" stroke-width="1.6"/><circle cx="20" cy="19.5" r="2.4" fill="none" stroke="#1e90e8" stroke-width="1.6"/></svg>
<svg class="a" style="left:893px;top:9px" width="22" height="22" viewBox="0 0 22 22"><rect width="22" height="22" rx="1.2" fill="#ffd400"/><path d="M11.3 11.6 H21.6 L11.3 21.6Z" fill="#3d3d3d"/><path d="M21.6 11.6 V21 C21.6 21.4 21.4 21.6 21 21.6 H11.3Z" fill="#eaa800"/></svg>
<svg class="a" style="left:938px;top:9px" width="22" height="22" viewBox="0 0 22 22"><path d="M0 2 H8 L10 4 H22 V20 H0Z" fill="#e8a92b"/><path d="M0 6 H22 V20 H0Z" fill="#fcd267"/><path d="M6 12 H16 V20 H13.5 V15 H8.5 V20 H6Z" fill="#2f8fdf"/></svg>
<div class="a" style="left:982px;top:8px;width:24px;height:24px;border-radius:50%;background:conic-gradient(from -60deg,#ea4335 0 120deg,#fbbc04 120deg 240deg,#34a853 240deg 360deg)"></div><div class="a" style="left:988.5px;top:14.5px;width:11px;height:11px;border-radius:50%;background:#fff"></div><div class="a" style="left:989.6px;top:15.6px;width:8.8px;height:8.8px;border-radius:50%;background:#1a73e8"></div>
<div class="a" style="left:1026px;top:8px;width:24px;height:24px;border-radius:50%;background:conic-gradient(from -60deg,#ea4335 0 120deg,#fbbc04 120deg 240deg,#34a853 240deg 360deg)"></div><div class="a" style="left:1032.5px;top:14.5px;width:11px;height:11px;border-radius:50%;background:#fff"></div><div class="a" style="left:1033.6px;top:15.6px;width:8.8px;height:8.8px;border-radius:50%;background:#1a73e8"></div><div class="a" style="left:1036.6px;top:18.5px;width:15px;height:15px;border-radius:50%;background:#1f8fd8;color:#fff;font-size:9.5px;line-height:15px;text-align:center;font-weight:700">R</div>
<div class="a" style="left:1070px;top:8px;width:24px;height:24px;border-radius:50%;background:conic-gradient(from -60deg,#ea4335 0 120deg,#fbbc04 120deg 240deg,#34a853 240deg 360deg)"></div><div class="a" style="left:1076.5px;top:14.5px;width:11px;height:11px;border-radius:50%;background:#fff"></div><div class="a" style="left:1077.6px;top:15.6px;width:8.8px;height:8.8px;border-radius:50%;background:#1a73e8"></div><div class="a" style="left:1080.6px;top:18.5px;width:15px;height:15px;border-radius:50%;background:#1898a8;color:#fff;font-size:9.5px;line-height:15px;text-align:center;font-weight:700">a</div>
<svg class="a" style="left:1115px;top:9px" width="22" height="22" viewBox="0 0 22 22"><rect width="22" height="22" rx="4" fill="#fff"/><path d="M4 6 L18 6 M4 16 L18 16 M4 6 L4 8 L18 14 L18 16 M18 6 L18 8 L4 14 L4 16" fill="none" stroke="#111" stroke-width="2" stroke-linejoin="round"/></svg>
<svg class="a" style="left:1158px;top:9px" width="23" height="23" viewBox="0 0 23 23"><defs><linearGradient id="wg" x1="0" y1="0" x2="1" y2="1"><stop offset="0" stop-color="#41d2f2"/><stop offset=".5" stop-color="#8a7ef0"/><stop offset="1" stop-color="#2b5fe0"/></linearGradient></defs><rect x="3" y="0.5" width="20" height="22" rx="3" fill="url(#wg)"/><rect x="0" y="10" width="12" height="12" rx="2" fill="#1848b8"/><text x="6" y="19.5" font-family="Liberation Sans" font-size="10" font-weight="700" fill="#fff" text-anchor="middle">W</text></svg>
<div class="a" style="left:1203px;top:9px;width:22px;height:22px;border-radius:50%;background:#1a2530;border:2px solid #c62828"></div><div class="a" style="left:1206px;top:16px;width:16px;font-size:5px;line-height:8px;color:#fff;text-align:center;font-weight:700">SINH</div>
<div class="a" style="left:1246px;top:8px;width:24px;height:24px;border-radius:50%;background:conic-gradient(from -60deg,#ea4335 0 120deg,#fbbc04 120deg 240deg,#34a853 240deg 360deg)"></div><div class="a" style="left:1252.5px;top:14.5px;width:11px;height:11px;border-radius:50%;background:#fff"></div><div class="a" style="left:1253.6px;top:15.6px;width:8.8px;height:8.8px;border-radius:50%;background:#1a73e8"></div>
<div class="a" style="left:1241px;top:38px;width:35px;height:2px;background:#76b9ed"></div>
<div class="a" style="left:1318px;top:8px;width:12px;height:12px;border-radius:50%;background:#c42b1c;color:#fff;font-size:9px;font-weight:700;line-height:12px;text-align:center">1</div>
<svg class="a" style="left:1392px;top:16px" width="14" height="8" viewBox="0 0 14 8"><path d="M1 7 L7 1 L13 7" fill="none" stroke="#fff" stroke-width="1.1"/></svg>
<svg class="a" style="left:1417px;top:11px" width="13" height="17" viewBox="0 0 13 17"><path d="M2 3.5 C3.5 1.5 8.5 1.5 10 3.5 M2 13.5 C3.5 15.5 8.5 15.5 10 13.5" fill="none" stroke="#fff" stroke-width="1"/><rect x="0.5" y="5.5" width="8" height="6" rx="1.5" fill="none" stroke="#fff" stroke-width="1"/><path d="M8.5 8.5 L12.5 6 V11Z" fill="none" stroke="#fff" stroke-width="1"/></svg>
<svg class="a" style="left:1438px;top:12px" width="17" height="15" viewBox="0 0 17 15"><path d="M0.5 5 H3.5 L7.5 1 V14 L3.5 10 H0.5Z" fill="none" stroke="#fff" stroke-width="1"/><path d="M10 5 C11 6.5 11 8.5 10 10 M12.5 3 C14.3 5.5 14.3 9.5 12.5 12 M14.8 1 C17.5 4.5 17.5 10.5 14.8 14" fill="none" stroke="#fff" stroke-width="1"/></svg>
<svg class="a" style="left:1462px;top:14px" width="18" height="13" viewBox="0 0 18 13"><rect x="4.5" y="0.5" width="13" height="9" fill="none" stroke="#fff" stroke-width="1"/><path d="M11 9.5 V12 M7.5 12.5 H14.5" stroke="#fff" stroke-width="1"/><rect x="0.5" y="0.5" width="5" height="4" fill="#1f1b1a" stroke="#fff" stroke-width="1"/><path d="M3 4.5 V12.5" stroke="#fff" stroke-width="1"/></svg>
<div class="a" style="left:1488px;top:4px;width:54px;font-size:12px;line-height:14px;color:#fff;text-align:center;white-space:nowrap">10:07 AM</div>
<div class="a" style="left:1488px;top:22px;width:54px;font-size:12px;line-height:14px;color:#fff;text-align:center;white-space:nowrap">12/6/2025</div>
<svg class="a" style="left:1558px;top:11px" width="28" height="28" viewBox="0 0 28 28"><path d="M1 1 H17 V14 H8 L5.5 17 V14 H1Z" fill="#fff"/><path d="M4 4.5 H14 M4 7.5 H14 M4 10.5 H10" stroke="#1f1b1a" stroke-width="1"/><circle cx="18.7" cy="16.4" r="7.8" fill="#2a2727" stroke="#8a8a8a" stroke-width="1"/><text x="18.9" y="20.8" font-family="Liberation Sans" font-size="12" font-weight="700" fill="#fff" text-anchor="middle">1</text></svg>
<div class="a" style="left:1595px;top:0;width:1px;height:40px;background:#6b6b6b"></div>
</div>
</body></html>
